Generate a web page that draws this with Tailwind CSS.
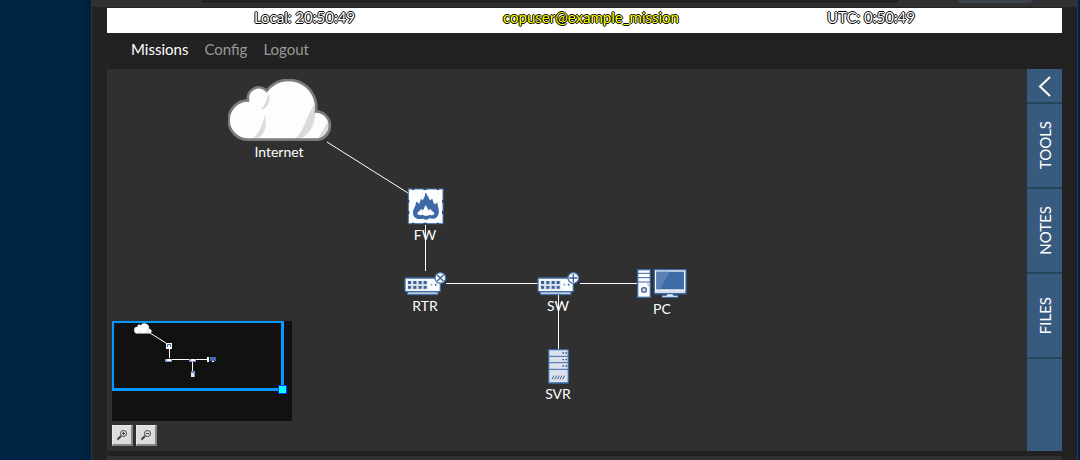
<!DOCTYPE html>
<html lang="en">
<head>
<meta charset="utf-8">
<title>example_mission</title>
<script src="https://cdn.jsdelivr.net/npm/@tailwindcss/browser@4"></script>
</head>
<body class="flex h-screen overflow-hidden bg-[#002140] font-['Lato',sans-serif] text-[15px] leading-5 text-white">
<div class="w-[91px] shrink-0 bg-linear-to-r from-[#002443] from-90% to-[#001f3a]"></div>
<div class="mr-[2px] flex min-w-0 flex-1 flex-col border-x border-[#1b3a56] bg-[#222]">
  <!-- Browser chrome -->
  <div class="flex h-[7px] shrink-0 items-start bg-[#303030] pr-[45px] pl-[110px]">
    <div class="mr-[60px] h-[3px] flex-1 rounded-b-lg bg-[#202124]"></div>
    <div class="h-[3px] w-[74px] rounded-b-lg bg-[#3b444f]"></div>
  </div>

  <div class="mt-px flex min-h-0 flex-1 flex-col pr-[15px] pl-[15px]">
    <header class="grid h-[25px] shrink-0 grid-cols-[395fr_178fr_382fr] bg-white text-center leading-[19px] [text-shadow:-1px_0_0_#000,0_1px_0_#000,1px_0_0_#000,0_-1px_0_#000]">
      <div>Local: 20:50:49</div>
      <div class="whitespace-nowrap text-[#ff0]">copuser@example_mission</div>
      <div>UTC: 0:50:49</div>
    </header>

    <nav class="flex h-9 shrink-0 items-center gap-4 px-6 pb-1 text-[#999]">
      <a href="#missions" class="text-white">Missions</a>
      <a href="#config">Config</a>
      <a href="#logout">Logout</a>
    </nav>

    <main class="flex min-h-0 flex-1">
      <div class="relative min-w-0 flex-1 bg-[#303030]">
        <svg class="block h-full w-full" role="img" aria-label="Network diagram">
          <defs>
            <g id="body">
              <path d="M52 333H144V344H52Z" fill="#b9c9e2" stroke="#3d69a5" stroke-width="3"/>
              <rect x="45" y="294" width="106" height="41" rx="3" fill="#fbfcfe" stroke="#3d69a5" stroke-width="4"/>
              <path d="M52 302H113V329H52Z" fill="#d5dfee"/>
              <path d="M54 303h9v9h-9zM70 303h9v9h-9zM86 303h9v9h-9zM101 303h9v9h-9zM54 318h9v8h-9zM70 318h9v8h-9zM86 318h9v8h-9zM101 318h9v8h-9z" fill="#3d5f91"/>
              <circle cx="124" cy="314" r="3" fill="#8ca9cf"/><circle cx="137" cy="314" r="3" fill="#3d69a5"/>
              <circle cx="151" cy="294" r="16" fill="#f8fafd" stroke="#4a76af" stroke-width="4"/>
            </g>
            <g id="cloud">
              <path d="M97 209A59 59 0 0 1 96 91A33 33 0 0 1 152 62A83 83 0 0 1 300 124A43 43 0 0 1 308 209Z" fill="#fcfdfe"/>
              <path d="M159 72C166 100 150 118 133 119Q149 105 155 78ZM146 136C155 162 148 207 110 207Q137 182 146 136ZM297 100C305 165 275 208 236 208C265 184 270 140 297 100ZM339 148C350 180 337 207 305 207Q322 180 339 148Z" fill="#dadbdc"/>
            </g>
          </defs>

          <g stroke="#fff" stroke-width="1">
            <path d="M220 73L301 124"/>
            <path d="M318.5 156V202M339 214.500H431M473 214.500H530M451.500 226V281" shape-rendering="crispEdges"/>
          </g>

          <svg x="121" y="10" width="105" height="62" viewBox="36 27 315 186">
            <use href="#cloud"/>
            <path d="M97 209A59 59 0 0 1 96 91A33 33 0 0 1 152 62A83 83 0 0 1 300 124A43 43 0 0 1 308 209Z" fill="none" stroke="#7b7b7b" stroke-width="8"/>
          </svg>

          <svg x="300" y="119" width="37" height="37" viewBox="51 25 111 111">
            <rect x="55" y="28" width="104" height="104" fill="#fcfdff" stroke="#4d76ad" stroke-width="3"/>
            <path d="M66 26h7v5h-7zM100 26h10v5h-10zM140 26h7v5h-7zM66 129h7v5h-7zM100 129h10v5h-10zM140 129h7v5h-7zM53 60h5v9h-5zM53 94h5v9h-5zM156 60h5v9h-5zM156 94h5v9h-5z" fill="#24456f"/>
            <path d="M107 38L120 62L127 57Q130 72 136 74L142 68C142 82 153 98 141 112C134 119 125 118 119 116Q109 124 99 117C84 121 69 115 69 99C68 88 78 82 78 66Q86 68 87 74L93 57L98 62Q105 52 107 38Z" fill="#3d6aa7"/>
            <path d="M107 76L116 92L122 88Q125 96 132 98C136 106 126 109 119 105Q108 112 98 105C88 109 78 104 84 97Q90 94 93 88L99 92Z" fill="#fcfdff"/>
          </svg>

          <svg x="297" y="202" width="43" height="25" viewBox="42 273 129 75">
            <use href="#body"/>
            <path d="M142 285L160 303M160 285L142 303" fill="none" stroke="#3d5f8f" stroke-width="4"/>
          </svg>
          <svg x="430" y="202" width="43" height="25" viewBox="42 273 129 75">
            <use href="#body"/>
            <path d="M151 282V306M139 294H163" fill="none" stroke="#3d5f8f" stroke-width="4"/>
          </svg>

          <svg x="530" y="200" width="50" height="30" viewBox="351 27 150 90">
            <rect x="353" y="29" width="38" height="83" fill="#fafbfd" stroke="#3d69a5" stroke-width="4"/>
            <path d="M353 40H391M353 53H391M353 66H391" stroke="#3d69a5" stroke-width="3"/>
            <path d="M381 72h7M384 77h4" stroke="#6c8dbc" stroke-width="2"/>
            <circle cx="372" cy="90" r="7" fill="#d8e1ef" stroke="#3d5f8f" stroke-width="4"/>
            <path d="M440 100h20v6h14v6h-48v-6h14z" fill="#e6edf6" stroke="#3d69a5" stroke-width="3"/>
            <rect x="403" y="29" width="95" height="72" fill="#f7f9fc" stroke="#3d69a5" stroke-width="4"/>
            <path d="M406 92H495V99H406Z" fill="#d4deec"/>
            <path d="M409 35H492V88H409Z" fill="#3e6ba8"/>
            <path d="M409 35H449L420 88H409Z" fill="#5a80b4"/>
          </svg>

          <svg x="441" y="280" width="21" height="35" viewBox="84 267 63 105">
            <rect x="86" y="269" width="59" height="100" rx="2" fill="#dbe2ee" stroke="#3d69a5" stroke-width="4"/>
            <path d="M86 289H145M86 308H145M86 328H145" stroke="#3d69a5" stroke-width="3"/>
            <path d="M127 279h5M136 279h5M127 299h5M136 299h5M127 318h5M136 318h5" stroke="#3d5f8f" stroke-width="4"/>
            <path d="M96 358l6-11M104 358l6-11M112 358l6-11M120 358l6-11M128 358l6-11" stroke="#3d5f8f" stroke-width="3"/>
          </svg>

          <g class="text-sm" fill="#fff" text-anchor="middle">
            <text x="172" y="88">Internet</text>
            <text x="318" y="171">FW</text>
            <text x="318" y="242">RTR</text>
            <text x="451" y="242">SW</text>
            <text x="555" y="245">PC</text>
            <text x="451" y="330">SVR</text>
          </g>
        </svg>

        <div class="absolute bottom-[5px] left-[5px]">
          <div class="relative h-[100px] w-[180px] bg-[#111]">
            <svg class="block h-full w-full" viewBox="0 0 180 100" aria-hidden="true">
              <path d="M38 12L54 22" stroke="#fff"/>
              <path d="M57.500 27V37M60 38.500H78M84 38.500H95M80.500 40V51" stroke="#fff" shape-rendering="crispEdges"/>
              <svg x="22" y="2" width="18" height="11" viewBox="36 27 315 186"><use href="#cloud"/></svg>
              <rect x="54" y="22" width="6" height="6" fill="#fff"/><path d="M55.500 26V23.500H58.500V26" fill="none" stroke="#3d69a5"/>
              <path d="M53 38h7v3h-7zM77 38h7v3h-7z" fill="#7a9bc9"/><path d="M55 38h4v2h-4zM79 38h4v2h-4zM95 36h2v5h-2z" fill="#fff"/>
              <rect x="98" y="36" width="6" height="4" fill="#426da8"/><path d="M100 40h2v1h-2z" fill="#fff"/>
              <rect x="79" y="50" width="4" height="6" fill="#6d91c5"/><rect x="79" y="52" width="3" height="4" fill="#e0e8f4"/>
            </svg>
            <div class="absolute top-0 left-0 h-[70px] w-[172px] border-t-2 border-r-3 border-b-3 border-l-2 border-[#0797ff]"></div>
            <div class="absolute top-16 left-[166px] size-[9px] border border-[#0033ff] bg-[#0ff]"></div>
          </div>
          <div class="mt-1 flex gap-[3px]">
            <button type="button" aria-label="Zoom in" class="flex size-[21px] items-center justify-center border-t border-r-2 border-b-2 border-l border-[#e8e8e8] border-r-[#858585] border-b-[#858585] bg-[#ddd]">
              <svg class="size-3" viewBox="0 0 12 12" fill="none" stroke="#444"><circle cx="7.500" cy="4.500" r="3"/><path d="M6 4.500H9M7.500 3V6"/><path d="M5 7L1.500 10.500" stroke-width="2"/></svg>
            </button>
            <button type="button" aria-label="Zoom out" class="flex size-[21px] items-center justify-center border-t border-r-2 border-b-2 border-l border-[#e8e8e8] border-r-[#858585] border-b-[#858585] bg-[#ddd]">
              <svg class="size-3" viewBox="0 0 12 12" fill="none" stroke="#444"><circle cx="7.500" cy="4.500" r="3"/><path d="M6 4.500H9"/><path d="M5 7L1.500 10.500" stroke-width="2"/></svg>
            </button>
          </div>
        </div>
      </div>

      <aside class="flex w-[35px] shrink-0 flex-col bg-[#375a7f]">
        <button type="button" aria-label="Expand panel" class="flex h-[35px] items-center justify-center border-b-2 border-[#25465a]">
          <svg class="h-6 w-4" viewBox="0 0 16 24" fill="none" stroke="#fff" stroke-width="2"><path d="M13 3L3 12.500L13 22"/></svg>
        </button>
        <button type="button" class="flex h-[85px] items-center justify-center border-b-2 border-[#25465a]"><span class="rotate-180 [writing-mode:vertical-rl]">TOOLS</span></button>
        <button type="button" class="flex h-[85px] items-center justify-center border-b-2 border-[#25465a]"><span class="rotate-180 [writing-mode:vertical-rl]">NOTES</span></button>
        <button type="button" class="flex h-[85px] items-center justify-center border-b-2 border-[#25465a]"><span class="rotate-180 [writing-mode:vertical-rl]">FILES</span></button>
      </aside>
    </main>
    <div class="mt-[5px] h-1 shrink-0 bg-[#303030]"></div>
  </div>
</div>
</body>
</html>
